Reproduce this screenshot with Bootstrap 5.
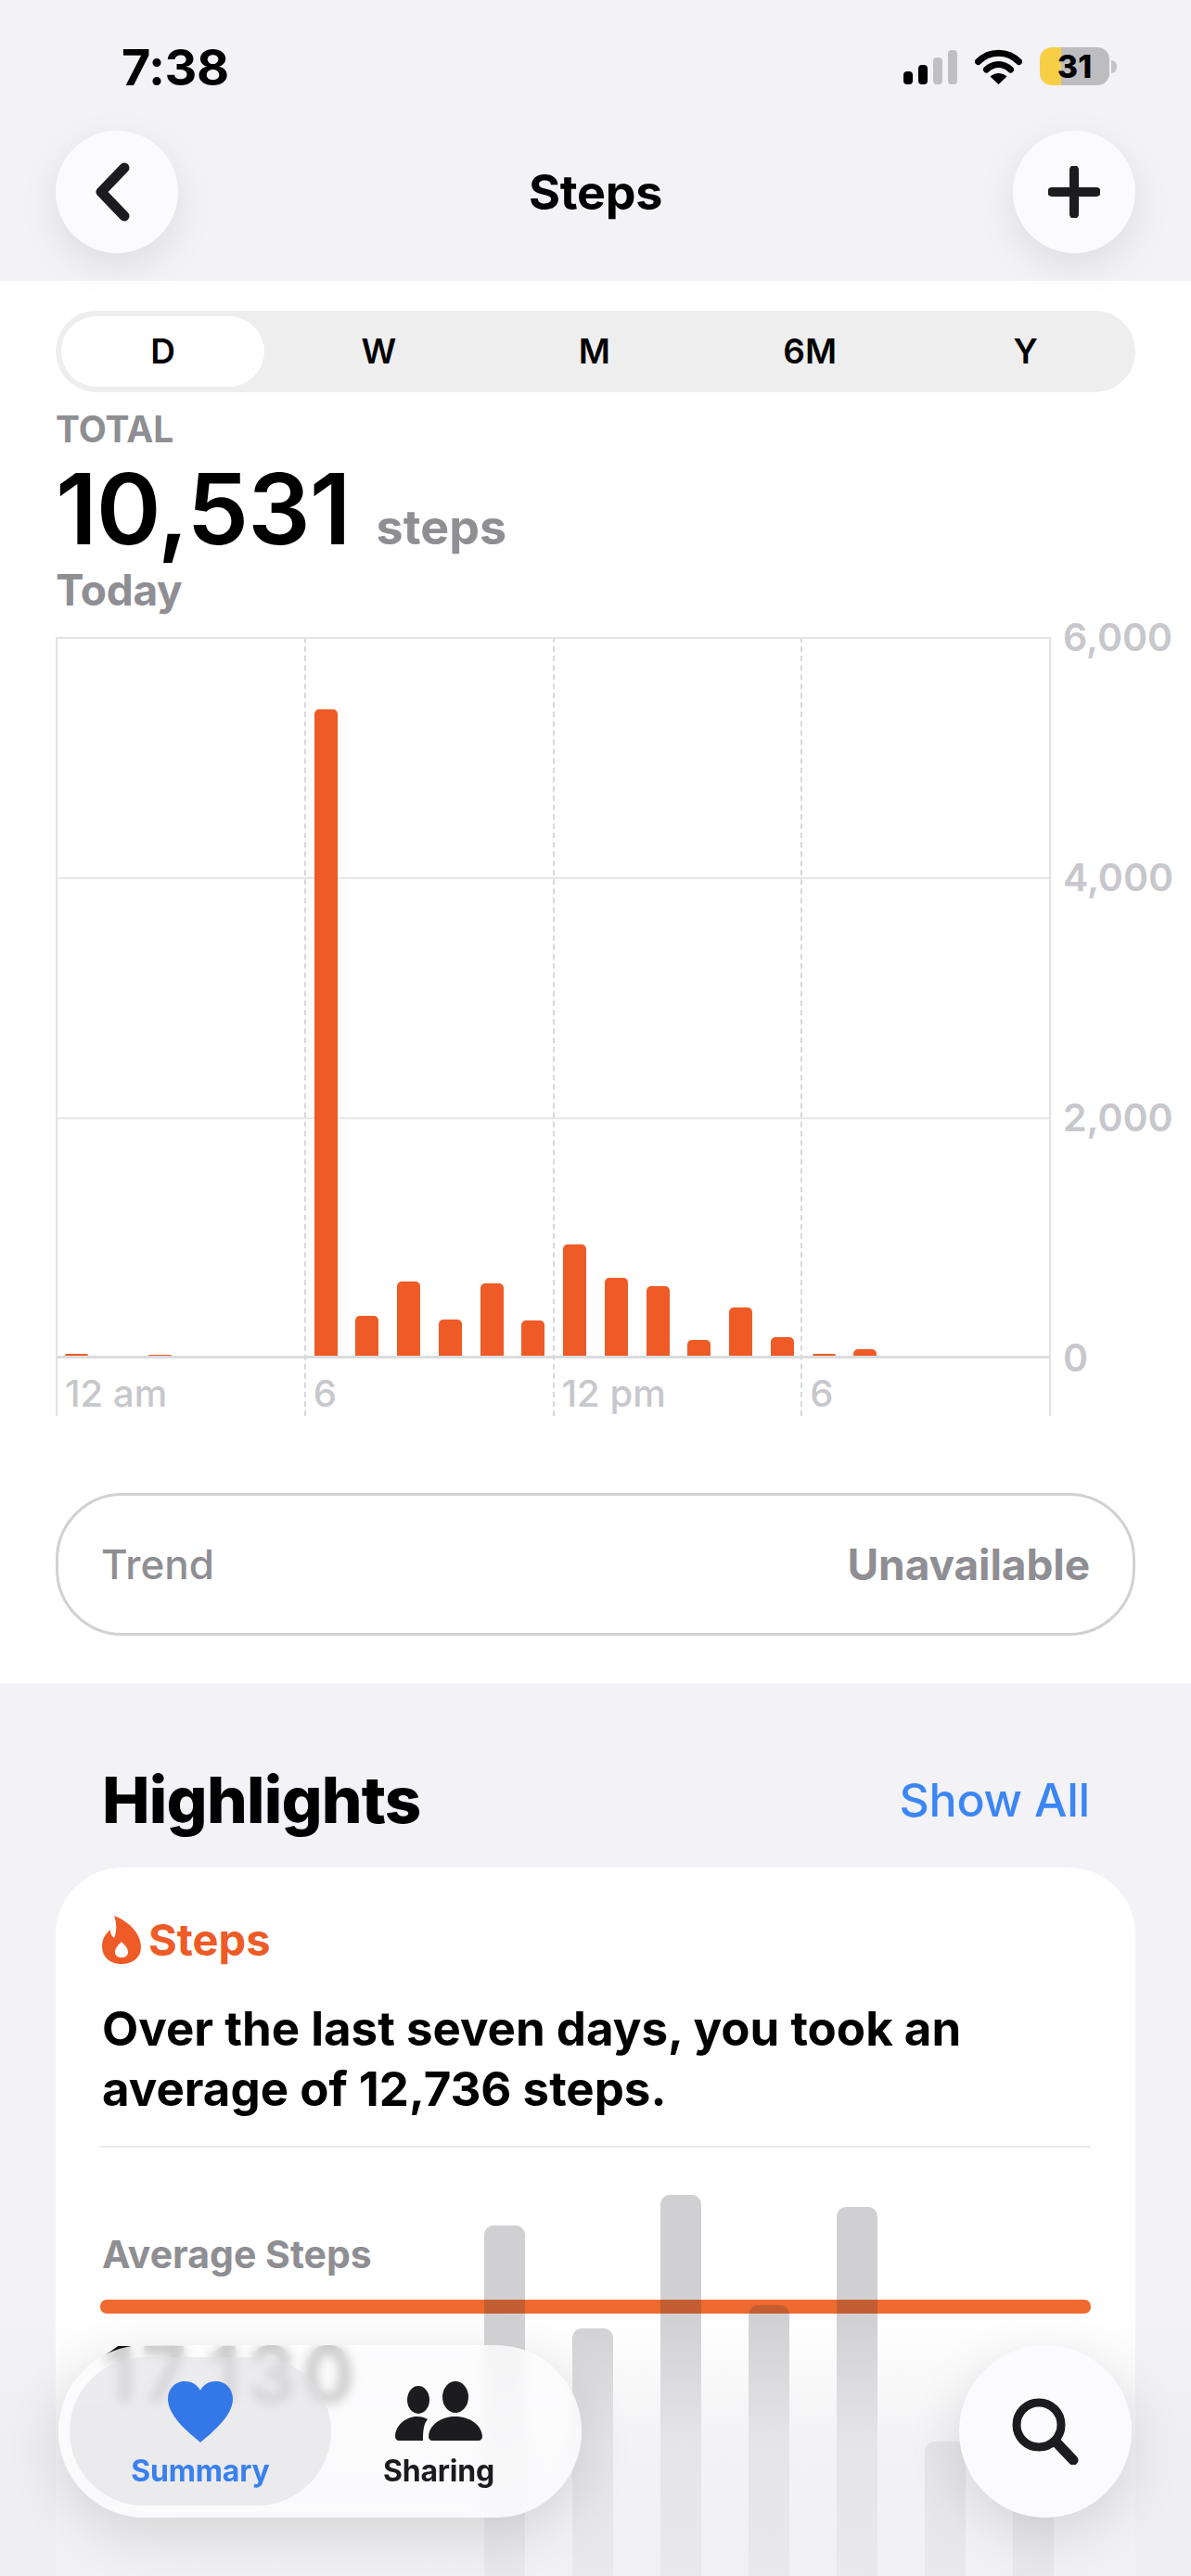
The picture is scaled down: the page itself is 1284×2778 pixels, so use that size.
<!DOCTYPE html>
<html lang="en">
<head>
    <meta charset="UTF-8">
    <meta name="viewport" content="width=device-width, initial-scale=1.0">
    <title>Steps</title>
    <link href="https://cdn.jsdelivr.net/npm/bootstrap@5.3.0/dist/css/bootstrap.min.css" rel="stylesheet">
    <style>
        body { background: #fff; font-family: Inter, "Liberation Sans", sans-serif; color: #000; }
        .phone { width: 1284px; height: 2778px; overflow: hidden; }
        .top-head { height: 303px; background: #f2f2f7; z-index: 3; }
        .status-row { height: 141px; padding: 0 80px 0 131px; }
        .status-time { font-size: 54px; font-weight: 700; line-height: 1; margin-top: 5px; width: 118px; letter-spacing: -.5px; }
        .status-icons { gap: 19px; margin-top: 2px; }
        .sig-bars { gap: 6px; height: 38px; }
        .sig-bars span { width: 10px; border-radius: 4px; background: #000; }
        .sig-bars span.off { background: #bfbfc4; }
        .batt { width: 75px; height: 41px; border-radius: 13px; background: linear-gradient(90deg, #f6cf47 31%, #bdbdc0 31%); font-size: 34px; font-weight: 800; line-height: 41px; text-align: center; }
        .batt-nub { width: 6px; height: 14px; margin-left: -17px; background: #c4c4c8; border-radius: 0 6px 6px 0; }
        .nav-row { padding: 0 60px; }
        .round-btn { width: 132px; height: 132px; border-radius: 50%; background: #fbfbfe; box-shadow: 0 14px 44px rgba(0,0,0,.09); }
        .nav-title { font-size: 52px; font-weight: 700; line-height: 1; letter-spacing: -.3px; padding-top: 2px; }
        .white-part { height: 1512px; padding: 32px 60px 0; background: #fff; }
        .seg-ctl { height: 88px; border-radius: 44px; background: #eeeeef; padding: 6px; }
        .seg-item { width: 232.5px; font-size: 37px; font-weight: 600; line-height: 76px; text-align: center; flex: none; }
        .seg-item.on { width: 219px; margin-right: 7px; background: #fff; border-radius: 38px; }
        .label-grey { color: #8e8e93; font-weight: 700; }
        .total-lbl { font-size: 39px; line-height: 44px; margin-top: 18px; }
        .num-row { margin-top: 12px; }
        .big-num { font-size: 106px; font-weight: 600; line-height: 104px; letter-spacing: -1px; }
        .big-unit { font-size: 52px; font-weight: 700; color: #8e8e93; margin-left: 28px; }
        .today-lbl { font-size: 46px; line-height: 50px; margin-top: 3px; letter-spacing: -.3px; }
        .chart-wrap { margin-top: 26px; }
        .chart-plot { width: 1073px; height: 840px; flex: none; border-left: 2px solid #e3e3e6; border-right: 2px solid #e3e3e6; }
        .chart-col { flex: 1; border-left: 2px dashed #d8d8dc; font-size: 40px; font-weight: 500; color: #c7c7cc; padding: 796px 0 0 8px; line-height: 40px; white-space: nowrap; }
        .chart-col:first-child { border-left: 0; }
        .chart-bars { top: 0; left: 0; right: 0; height: 778px; padding: 0 0 0 8px; gap: 19.75px; border-top: 2px solid #e3e3e6; border-bottom: 3px solid #dcdcdf; background: repeating-linear-gradient(to bottom, transparent 0, transparent 257px, #e7e7ea 257px, #e7e7ea 259px); }
        .chart-bar { width: 25px; flex: none; background: #ee5b26; border-radius: 5px 5px 0 0; }
        .axis-y { margin: -24px 0 0 13px; font-size: 41px; font-weight: 600; color: #c7c7cc; }
        .axis-y div { height: 259px; line-height: 48px; }
        .axis-y div:last-child { height: 48px; }
        .trend-box { height: 154px; margin-top: 83px; border: 3px solid #d1d1d3; border-radius: 72px; padding: 0 46px; font-size: 44px; color: #8e8e93; }
        .trend-box .t-val { font-weight: 700; font-size: 46px; letter-spacing: -.1px; }
        .grey-part { background: #f2f2f7; padding: 0 60px; height: 963px; }
        .high-head { padding: 86px 49px 0 50px; height: 199px; }
        .high-title { font-size: 69px; font-weight: 800; line-height: 80px; letter-spacing: -.8px; }
        .show-link { font-size: 50px; font-weight: 500; color: #3c86f4; text-decoration: none; line-height: 80px; letter-spacing: -.2px; }
        .high-card { height: 900px; border: 0; border-radius: 72px; background: #fff; padding: 52px 48px 0 50px; }
        .card-tag { font-size: 47px; font-weight: 700; color: #ee5b26; line-height: 52px; gap: 8px; }
        .card-text { font-size: 51px; font-weight: 700; line-height: 65px; margin: 37px 0 0; }
        .card-rule { height: 2px; background: #e8e8ed; margin: 29px 0 0 -2px; }
        .avg-lbl { font-size: 41px; line-height: 48px; margin-top: 91px; }
        .avg-line { height: 15px; border-radius: 7px; background: #ee6a2f; margin: 25px 0 0 -2px; }
        .avg-num { font-size: 84px; font-weight: 700; line-height: 80px; margin-top: 26px; color: #111; letter-spacing: 6px; z-index: 5; }
        .grey-bars { left: 462px; top: 347px; height: 440px; gap: 51px; }
        .grey-bar { width: 44px; flex: none; background: rgba(60,60,67,.24); border-radius: 10px 10px 0 0; }
        .fade-layer { left: 0; right: 0; top: 2495px; height: 283px; z-index: 4; background: linear-gradient(to bottom, rgba(238,238,241,0) 0, rgba(238,238,241,.72) 50%, rgba(238,238,241,.82) 100%); }
        .bottom-bar { left: 63px; right: 64px; bottom: 63px; z-index: 6; }
        .tab-pill { width: 564px; height: 186px; border-radius: 93px; padding: 13px 12px; background: rgba(252,252,254,.78); -webkit-backdrop-filter: blur(6px); backdrop-filter: blur(6px); box-shadow: 0 18px 60px rgba(0,0,0,.12); }
        .tab-item { height: 160px; flex: none; border-radius: 80px; font-size: 32px; font-weight: 700; line-height: 40px; text-decoration: none; color: #1c1c1e; width: 232px; }
        .tab-item span { letter-spacing: -.2px; }
        .tab-item.on { width: 282px; background: rgba(222,222,226,.55); color: #3a80ee; }
        .tab-icon { height: 66px; margin: 26px 0 11px; }
        .search-btn { width: 186px; height: 186px; border-radius: 50%; background: #fbfbfd; box-shadow: 0 18px 60px rgba(0,0,0,.12); }
    </style>
</head>
<body class="m-0">
    <div class="phone position-relative">
        <!-- Шапка -->
        <div class="top-head position-relative">
            <div class="status-row d-flex justify-content-between align-items-center">
                <div class="status-time">7:38</div>
                <div class="status-icons d-flex align-items-center">
                    <div class="sig-bars d-flex align-items-end">
                        <span style="height:14px"></span>
                        <span style="height:21px"></span>
                        <span class="off" style="height:29px"></span>
                        <span class="off" style="height:37px"></span>
                    </div>
                    <svg width="51" height="38" viewBox="0 0 51 38">
                        <path d="M3.5 13.5C15.5 1 35.500 1 47.500 13.500M12.500 22C20 14.500 31 14.500 38.500 22" fill="none" stroke="#000" stroke-width="7" stroke-linecap="round"/>
                        <path d="M25.500 38L16.500 29.500C21.500 24.800 29.500 24.800 34.500 29.500Z" fill="#000"/>
                    </svg>
                    <div class="d-flex align-items-center">
                        <div class="batt">31</div>
                    </div>
                    <div class="batt-nub"></div>
                </div>
            </div>
            <div class="nav-row d-flex justify-content-between align-items-center">
                <div class="round-btn d-flex align-items-center justify-content-center">
                    <svg width="50" height="70" viewBox="0 0 50 70"><path d="M33 9L8 35L33 61" fill="none" stroke="#1c1c1e" stroke-width="11" stroke-linecap="round" stroke-linejoin="round"/></svg>
                </div>
                <div class="nav-title">Steps</div>
                <div class="round-btn d-flex align-items-center justify-content-center">
                    <svg width="56" height="56" viewBox="0 0 56 56"><path d="M28 4V52M4 28H52" fill="none" stroke="#1c1c1e" stroke-width="10" stroke-linecap="round"/></svg>
                </div>
            </div>
        </div>

        <!-- График -->
        <div class="white-part">
            <div class="seg-ctl d-flex">
                <div class="seg-item on">D</div>
                <div class="seg-item">W</div>
                <div class="seg-item">M</div>
                <div class="seg-item">6M</div>
                <div class="seg-item">Y</div>
            </div>
            <div class="total-lbl label-grey">TOTAL</div>
            <div class="num-row d-flex align-items-baseline">
                <div class="big-num">10,531</div>
                <div class="big-unit">steps</div>
            </div>
            <div class="today-lbl label-grey">Today</div>
            <div class="chart-wrap d-flex">
                <div class="chart-plot position-relative d-flex">
                    <div class="chart-col">12 am</div>
                    <div class="chart-col">6</div>
                    <div class="chart-col">12 pm</div>
                    <div class="chart-col">6</div>
                    <div class="chart-bars position-absolute d-flex align-items-end" id="bars"></div>
                </div>
                <div class="axis-y">
                    <div>6,000</div>
                    <div>4,000</div>
                    <div>2,000</div>
                    <div>0</div>
                </div>
            </div>
            <div class="trend-box d-flex justify-content-between align-items-center">
                <span class="fw-medium">Trend</span>
                <span class="t-val">Unavailable</span>
            </div>
        </div>

        <!-- Highlights -->
        <div class="grey-part">
            <div class="high-head d-flex justify-content-between align-items-start">
                <div class="high-title">Highlights</div>
                <a class="show-link" href="#">Show All</a>
            </div>
            <div class="card high-card position-relative">
                <div class="card-tag d-flex align-items-center">
                    <svg width="42" height="52" viewBox="0 0 42 52"><path fill-rule="evenodd" d="M13 0C27 5 42 18 42 34C42 45 33 52 21 52C9 52 0 45 0 33C0 25 4 19 9 15C9 19 10 22 13 24C16 17 16 8 13 0ZM21 28C17 32 14 35 14 39C14 43 17 45 21 45C25 45 28 43 28 39C28 35 25 32 21 28Z" fill="#ee5b26"/></svg>
                    <span>Steps</span>
                </div>
                <p class="card-text">Over the last seven days, you took an average of 12,736 steps.</p>
                <div class="card-rule"></div>
                <div class="avg-lbl label-grey">Average Steps</div>
                <div class="avg-line"></div>
                <div class="avg-num position-relative">17,130</div>
                <div class="grey-bars position-absolute d-flex align-items-end">
                    <div class="grey-bar" style="height:401px"></div>
                    <div class="grey-bar" style="height:290px"></div>
                    <div class="grey-bar" style="height:434px"></div>
                    <div class="grey-bar" style="height:315px"></div>
                    <div class="grey-bar" style="height:421px"></div>
                    <div class="grey-bar" style="height:168px"></div>
                    <div class="grey-bar" style="height:100px"></div>
                </div>
            </div>
        </div>

        <div class="fade-layer position-absolute"></div>

        <!-- Нижняя панель -->
        <div class="bottom-bar position-absolute d-flex justify-content-between">
            <div class="tab-pill d-flex">
                <a class="tab-item on d-flex flex-column align-items-center" href="#">
                    <svg class="tab-icon" width="70" height="66" viewBox="0 0 70 66"><path d="M35 66C29 60 0 40 0 19C0 8 8 0 18 0C26 0 32 4 35 10C38 4 44 0 52 0C62 0 70 8 70 19C70 40 41 60 35 66Z" fill="#3478e8"/></svg>
                    <span>Summary</span>
                </a>
                <a class="tab-item d-flex flex-column align-items-center" href="#">
                    <svg class="tab-icon" width="94" height="66" viewBox="0 0 94 66"><ellipse cx="25" cy="20" rx="12" ry="15" fill="#1c1c1e"/><ellipse cx="65" cy="17" rx="14" ry="17" fill="#1c1c1e"/><path d="M0 60C0 48 11 38 24 38C28 38 32 39 35 41C31 46 30 52 30 64H4C2 64 0 62 0 60ZM36 60C36 48 49 38 65 38C81 38 94 48 94 60C94 62 92 64 90 64H40C38 64 36 62 36 60Z" fill="#1c1c1e"/></svg>
                    <span>Sharing</span>
                </a>
            </div>
            <div class="search-btn d-flex align-items-center justify-content-center">
                <svg width="72" height="72" viewBox="0 0 72 72"><circle cx="29" cy="29" r="24" fill="none" stroke="#1c1c1e" stroke-width="9"/><path d="M47 47L66 67" fill="none" stroke="#1c1c1e" stroke-width="11" stroke-linecap="round"/></svg>
            </div>
        </div>
    </div>

    <script>
        // Столбики по часам
        const heights = [2,0,1,0,0,0,697,43,80,39,78,38,120,84,75,17,52,20,2,7,0,0,0,0];
        const barsBox = document.getElementById('bars');
        heights.forEach(h => {
            const bar = document.createElement('div');
            bar.className = 'chart-bar';
            bar.style.height = h + 'px';
            barsBox.appendChild(bar);
        });
    </script>
    <script src="https://cdn.jsdelivr.net/npm/bootstrap@5.3.0/dist/js/bootstrap.bundle.min.js"></script>
</body>
</html>
